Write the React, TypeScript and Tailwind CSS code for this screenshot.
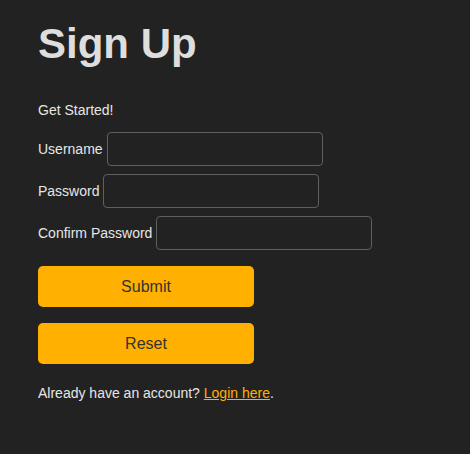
import React from 'react';

const SignUpPage = () => {
  return (
    <div className="min-h-[454px] w-full bg-[#222222] text-[#e6e6e6] pl-[38px] pt-[20px] font-['Liberation_Sans',Arial,sans-serif]">
      {/* Title */}
      <h1 className="text-[42px] leading-[48px] font-bold text-[#dedede]">Sign Up</h1>

      <p className="mt-[32px] text-[14px] leading-[20px]">Get Started!</p>

      {/* Form fields */}
      <form className="mt-[12px] flex flex-col gap-[8px]" onSubmit={(e) => e.preventDefault()}>
        <div className="flex items-center text-[14px]">
          <label>Username</label>
          <input type="text" className="ml-[4px] w-[216px] h-[34px] rounded-[4px] border border-[#5f5f5f] bg-[#222222] px-2 text-[#e6e6e6] outline-none" />
        </div>
        <div className="flex items-center text-[14px]">
          <label>Password</label>
          <input type="password" className="ml-[4px] w-[216px] h-[34px] rounded-[4px] border border-[#5f5f5f] bg-[#222222] px-2 text-[#e6e6e6] outline-none" />
        </div>
        <div className="flex items-center text-[14px]">
          <label>Confirm Password</label>
          <input type="password" className="ml-[4px] w-[216px] h-[34px] rounded-[4px] border border-[#5f5f5f] bg-[#222222] px-2 text-[#e6e6e6] outline-none" />
        </div>

        {/* Buttons */}
        <div className="mt-[8px] flex flex-col gap-[16px]">
          <button type="submit" className="w-[216px] h-[41px] rounded-[5px] bg-[#ffb000] text-[16px] text-[#333333]">
            Submit
          </button>
          <button type="reset" className="w-[216px] h-[41px] rounded-[5px] bg-[#ffb000] text-[16px] text-[#333333]">
            Reset
          </button>
        </div>
      </form>

      <p className="mt-[19px] text-[14px] leading-[20px]">
        Already have an account?{' '}
        <a href="#" className="text-[#ffb000] underline">Login here</a>.
      </p>
    </div>
  );
};

export default SignUpPage;
